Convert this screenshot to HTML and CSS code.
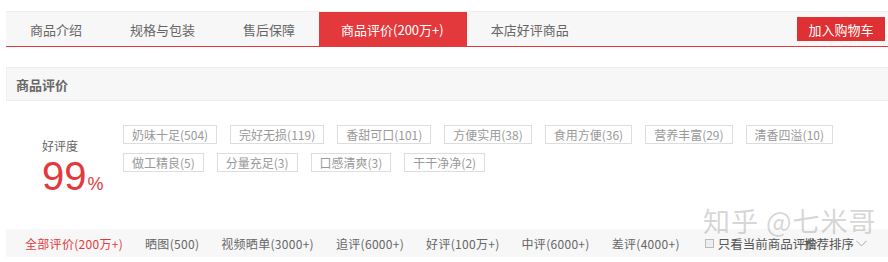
FILE: index.html
```html
<!DOCTYPE html>
<html lang="zh-CN">
<head>
<meta charset="utf-8">
<link rel="stylesheet" href="styles.css">
</head>
<body>
<div class="page">
  <div class="tabbar">
    <div class="tab">商品介绍</div>
    <div class="tab">规格与包装</div>
    <div class="tab">售后保障</div>
    <div class="tab active">商品评价(200万+)</div>
    <div class="tab">本店好评商品</div>
    <div class="spacer"></div>
    <div class="cart-btn">加入购物车</div>
  </div>

  <div class="section-head">商品评价</div>

  <div class="rate-body">
    <div class="score">
      <div class="score-label">好评度</div>
      <div class="score-num">99<span class="pct">%</span></div>
    </div>
    <div class="tags">
      <span class="tag">奶味十足(504)</span>
      <span class="tag">完好无损(119)</span>
      <span class="tag">香甜可口(101)</span>
      <span class="tag">方便实用(38)</span>
      <span class="tag">食用方便(36)</span>
      <span class="tag">营养丰富(29)</span>
      <span class="tag">清香四溢(10)</span>
      <span class="tag">做工精良(5)</span>
      <span class="tag">分量充足(3)</span>
      <span class="tag">口感清爽(3)</span>
      <span class="tag">干干净净(2)</span>
    </div>
  </div>

  <div class="filter">
    <span class="f-item current">全部评价(200万+)</span>
    <span class="f-item">晒图(500)</span>
    <span class="f-item">视频晒单(3000+)</span>
    <span class="f-item">追评(6000+)</span>
    <span class="f-item">好评(100万+)</span>
    <span class="f-item">中评(6000+)</span>
    <span class="f-item">差评(4000+)</span>
    <span class="only"><span class="cbox"></span>只看当前商品评价</span>
    <span class="sort">推荐排序<svg class="chev" width="11" height="7" viewBox="0 0 11 7"><polyline points="0.5,0.8 5.5,6 10.5,0.8" fill="none" stroke="#aaa" stroke-width="1"/></svg></span>
    <span class="watermark">知乎 @七米哥</span>
  </div>
</div>
</body>
</html>
```

FILE: styles.css
```css
* { box-sizing: border-box; }
html, body { margin: 0; padding: 0; background: #fff; }
body {
  font-family: "Noto Sans CJK SC", "Noto Sans", sans-serif;
  color: #666;
  width: 888px;
  height: 262px;
  overflow: hidden;
}
.page {
  padding: 11px 0 0 6px;
}
.tabbar {
  display: flex;
  align-items: center;
  height: 36px;
  background: #f7f7f7;
  border-top: 1px solid #eee;
  border-bottom: 1px solid #e4393c;
}
.tab {
  height: 100%;
  display: flex;
  align-items: center;
  padding: 0 24px;
  font-size: 13px;
  color: #666;
  white-space: nowrap;
}
.tab.active {
  background: #e4393c;
  color: #fff;
  padding: 0 23px 0 22px;
}
.spacer { flex: 1; }
.cart-btn {
  width: 88px;
  height: 24px;
  margin-right: 3px;
  background: #df3033;
  color: #fff;
  font-size: 13px;
  display: flex;
  align-items: center;
  justify-content: center;
}
.section-head {
  margin-top: 20px;
  height: 34px;
  background: #f7f7f7;
  border: 1px solid #eee;
  border-right: none;
  padding-left: 9px;
  display: flex;
  align-items: center;
  font-size: 13px;
  font-weight: bold;
  color: #666;
}
.rate-body {
  display: flex;
  padding-top: 24px;
  height: 128px;
}
.score {
  width: 117px;
  padding-left: 36px;
  padding-top: 13px;
}
.score-label {
  font-size: 12px;
  line-height: 16px;
  color: #666;
}
.score-num {
  font-family: "Liberation Sans", Arial, sans-serif;
  font-size: 40px;
  line-height: 36px;
  color: #e4393c;
  margin-top: 4px;
}
.pct {
  font-size: 18px;
  margin-left: 1px;
}
.tags {
  flex: 1;
  display: flex;
  flex-wrap: wrap;
  align-content: flex-start;
  padding-right: 20px;
}
.tag {
  height: 19px;
  line-height: 17px;
  padding: 0 8px;
  border: 1px solid #ddd;
  font-size: 12px;
  color: #999;
  margin: 0 13px 9px 0;
  white-space: nowrap;
}
.filter {
  position: relative;
  height: 28px;
  background: #f7f7f7;
  display: flex;
  align-items: center;
  padding-left: 19px;
  font-size: 12px;
}
.f-item {
  color: #666;
  margin-right: 22px;
  white-space: nowrap;
  letter-spacing: 0.3px;
}
.f-item.current { color: #e4393c; }
.only {
  display: flex;
  align-items: center;
  color: #555;
  white-space: nowrap;
  font-size: 12.5px;
  margin-left: 3px;
}
.cbox {
  width: 9px;
  height: 9px;
  border: 1px solid #bbb;
  background: #eee;
  margin-right: 4px;
}
.sort {
  position: absolute;
  right: 21px;
  top: 0;
  height: 28px;
  display: flex;
  align-items: center;
  color: #555;
  font-size: 12.5px;
  white-space: nowrap;
}
.chev { margin-left: 2px; }
.watermark {
  position: absolute;
  left: 697px;
  top: -23px;
  font-size: 27px;
  line-height: 30px;
  color: rgba(150, 150, 150, 0.4);
  letter-spacing: 1px;
  white-space: nowrap;
  pointer-events: none;
}
```
